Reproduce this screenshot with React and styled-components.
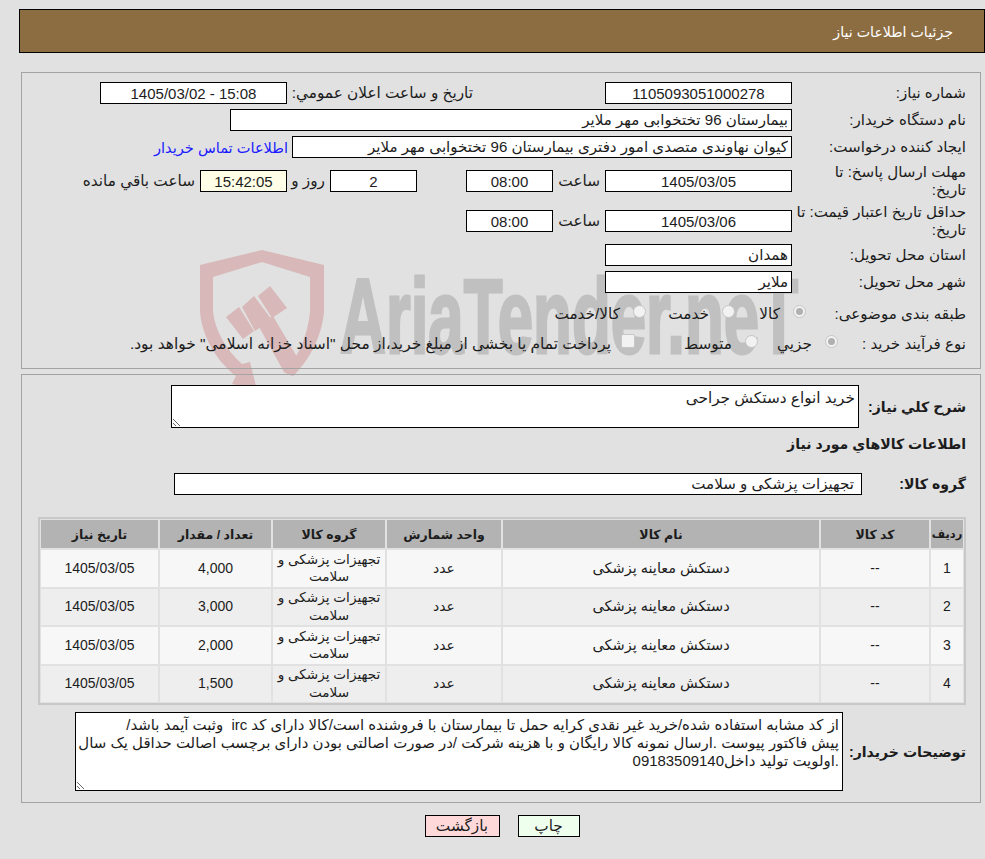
import React from "react";
import styled, { createGlobalStyle } from "styled-components";

const GlobalStyle = createGlobalStyle`
  html, body {
    margin: 0;
    padding: 0;
    background: #e1e1e1;
    overflow: hidden;
  }
  body {
    font-family: "Liberation Sans", "DejaVu Sans", sans-serif;
    font-size: 15.3px;
    color: #1c1c1c;
  }
`;

const rows = [
  { id: 1, qty: "4,000" },
  { id: 2, qty: "3,000" },
  { id: 3, qty: "2,000" },
  { id: 4, qty: "1,500" },
];

const description =
  "از کد مشابه استفاده شده/خرید غیر نقدی کرایه حمل تا بیمارستان با فروشنده است/کالا دارای کد irc  وثبت آیمد باشد/\n" +
  "پیش فاکتور پیوست .ارسال نمونه کالا رایگان و با هزینه شرکت /در صورت اصالتی بودن دارای برچسب اصالت حداقل یک سال\n" +
  ".اولویت تولید داخل09183509140";

const Watermark = () => (
  <Mark viewBox="190 245 620 145" aria-hidden="true">
    <g fill="#d8b8b8">
      <path
        fillRule="evenodd"
        d="M262 250 L324 265 V312 C322 335 310 360 293 376 L284 372 C298 358 308 335 310 312 V277 L262 262 L213 277 V312 C215 330 226 350 242 364 L250 362 L257 390 L232 384 L236 376 C215 360 202 335 200 312 V265 Z"
      />
      <polygon points="258,296 270,286 287,308 272,318" />
      <polygon points="242,307 254,296 272,320 255,331" />
      <polygon points="226,317 239,307 254,331 243,339" />
      <polygon points="258,325 273,316 300,362 292,376 284,372" />
    </g>
    <text
      x="340"
      y="353"
      fill="#c0c0c0"
      stroke="#c0c0c0"
      strokeWidth="3"
      fontFamily="Liberation Sans"
      fontWeight="700"
      fontSize="105"
      textLength="458"
      lengthAdjust="spacingAndGlyphs"
      direction="ltr"
    >
      AriaTender.neT
    </text>
  </Mark>
);

const App = () => {
  return (
    <Page dir="rtl">
      <GlobalStyle />
      <Watermark />
      <Content>
        <Header>جزئیات اطلاعات نیاز</Header>

        <InfoPanel>
          <Row $first>
            <Label>شماره نیاز:</Label>
            <Field $w={187} $center readOnly value="1105093051000278" />
            <InlineLabel $w={186} $mr={132}>تاریخ و ساعت اعلان عمومي:</InlineLabel>
            <Field $w={187} $center $ltr readOnly value="1405/03/02 - 15:08" />
          </Row>
          <Row>
            <Label>نام دستگاه خریدار:</Label>
            <Field $w={562} readOnly value="بیمارستان 96 تختخوابی مهر ملایر" />
          </Row>
          <Row>
            <Label>ایجاد کننده درخواست:</Label>
            <Field $w={500} readOnly value="کیوان نهاوندی متصدی امور دفتری بیمارستان 96 تختخوابی مهر ملایر" />
            <ContactLink href="#">اطلاعات تماس خریدار</ContactLink>
          </Row>
          <Row $h={36}>
            <Label>مهلت ارسال پاسخ: تا<br />تاریخ:</Label>
            <Field $w={187} $center readOnly value="1405/03/05" />
            <InlineLabel $w={47} $mr={5}>ساعت</InlineLabel>
            <Field $w={87} $center readOnly value="08:00" />
            <Field $w={87} $mr={49} $center readOnly value="2" />
            <InlineLabel $w={38} $mr={5}>روز و</InlineLabel>
            <Field $w={87} $center $bg="#ffffe8" readOnly value="15:42:05" />
            <InlineLabel $mr={5}>ساعت باقي مانده</InlineLabel>
          </Row>
          <Row $h={36} $mt={4}>
            <Label>حداقل تاریخ اعتبار قیمت: تا<br />تاریخ:</Label>
            <Field $w={187} $center readOnly value="1405/03/06" />
            <InlineLabel $w={47} $mr={5}>ساعت</InlineLabel>
            <Field $w={87} $center readOnly value="08:00" />
          </Row>
          <Row>
            <Label>استان محل تحویل:</Label>
            <Field $w={187} readOnly value="همدان" />
          </Row>
          <Row>
            <Label>شهر محل تحویل:</Label>
            <Field $w={187} readOnly value="ملایر" />
          </Row>
          <Row $mt={10}>
            <Label $w={160}>طبقه بندی موضوعی:</Label>
            <Choice $w={71}><Radio $on />کالا</Choice>
            <Choice $w={89}><Radio />خدمت</Choice>
            <Choice><Radio />کالا/خدمت</Choice>
          </Row>
          <Row $mt={8}>
            <Label $w={128}>نوع فرآیند خرید :</Label>
            <Choice $w={80}><Radio $on />جزيي</Choice>
            <Choice $w={123}><Radio />متوسط</Choice>
            <Choice $fs={15.45}><CheckBox />پرداخت تمام یا بخشی از مبلغ خرید،از محل "اسناد خزانه اسلامی" خواهد بود.</Choice>
          </Row>
        </InfoPanel>

        <GoodsPanel>
          <Row $first>
            <BoldLabel $w={107}>شرح کلي نیاز:</BoldLabel>
            <Note $w={688} $h={43} readOnly value="خرید انواع دستکش جراحی" />
          </Row>
          <SectionTitle>اطلاعات کالاهاي مورد نیاز</SectionTitle>
          <Row $mt={20}>
            <BoldLabel $w={104}>گروه کالا:</BoldLabel>
            <GroupField $w={688} readOnly value="تجهیزات پزشکی و سلامت" />
          </Row>

          <GoodsTable>
            <colgroup>
              <col width="32" />
              <col width="108" />
              <col width="316" />
              <col width="114" />
              <col width="112" />
              <col width="111" />
              <col width="117" />
            </colgroup>
            <thead>
              <tr>
                <th>ردیف</th>
                <th>کد کالا</th>
                <th>نام کالا</th>
                <th>واحد شمارش</th>
                <th>گروه کالا</th>
                <th>تعداد / مقدار</th>
                <th>تاریخ نیاز</th>
              </tr>
            </thead>
            <tbody>
              {rows.map((row) => (
                <tr key={row.id}>
                  <td>{row.id}</td>
                  <td>--</td>
                  <td>دستکش معاینه پزشکی</td>
                  <td>عدد</td>
                  <td>تجهیزات پزشکی و سلامت</td>
                  <td>{row.qty}</td>
                  <td>1405/03/05</td>
                </tr>
              ))}
            </tbody>
          </GoodsTable>

          <Row $mt={7}>
            <BoldLabel $w={123}>توضیحات خریدار:</BoldLabel>
            <Note $w={768} $h={79} $fs={14.95} readOnly value={description} />
          </Row>
        </GoodsPanel>

        <Actions>
          <ActionButton type="button" $w={62} $bg="#eeffee">چاپ</ActionButton>
          <ActionButton type="button" $w={75} $bg="#ffd9d9">بازگشت</ActionButton>
        </Actions>
      </Content>
    </Page>
  );
};

export default App;

const Page = styled.div`
  position: relative;
  width: 985px;
  height: 859px;
  overflow: hidden;
`;

const Mark = styled.svg`
  position: absolute;
  left: 190px;
  top: 245px;
  width: 620px;
  height: 145px;
`;

const Content = styled.div`
  position: relative;
  padding-top: 9px;
`;

const Header = styled.div`
  box-sizing: border-box;
  width: 966px;
  height: 44px;
  margin-left: 19px;
  padding: 2px 31px 0;
  display: flex;
  align-items: center;
  background: #8c6d42;
  border: 1px solid #000;
  color: #fff;
  font-size: 14.2px;
`;

const Panel = styled.section`
  box-sizing: border-box;
  width: 960px;
  margin-right: 4px;
  padding: 9px 14px 0 0;
  border: 1px solid #a3a3a3;
`;

const InfoPanel = styled(Panel)`
  height: 297px;
  margin-top: 19px;
`;

const GoodsPanel = styled(Panel)`
  height: 429px;
  margin-top: 5px;
  padding-top: 10px;
`;

const Row = styled.div`
  display: flex;
  align-items: center;
  height: ${(p) => (p.$h ? `${p.$h}px` : "auto")};
  min-height: 22px;
  margin-top: ${(p) => (p.$first ? 0 : p.$mt ?? 5)}px;
`;

const Label = styled.label`
  flex: none;
  width: ${(p) => p.$w ?? 167}px;
  margin-left: ${(p) => (p.$w ? 0 : 7)}px;
  font-size: 15.1px;
  line-height: 18px;
  white-space: nowrap;
`;

const BoldLabel = styled.label`
  flex: none;
  width: ${(p) => p.$w}px;
  font-weight: 700;
  font-size: 14.1px;
  white-space: nowrap;
`;

const InlineLabel = styled.span`
  flex: none;
  width: ${(p) => (p.$w ? `${p.$w}px` : "auto")};
  margin-right: ${(p) => p.$mr ?? 0}px;
  white-space: nowrap;
`;

const Field = styled.input`
  box-sizing: border-box;
  flex: none;
  width: ${(p) => p.$w}px;
  height: 22px;
  margin: 0 ${(p) => p.$mr ?? 0}px 0 0;
  padding: 0 3px;
  border: 1px solid #000;
  border-radius: 0;
  outline: none;
  background: ${(p) => p.$bg ?? "#fff"};
  color: #1c1c1c;
  font: inherit;
  font-size: ${(p) => (p.$center ? 15 : 15.1)}px;
  text-align: ${(p) => (p.$center ? "center" : "right")};
  direction: ${(p) => (p.$ltr ? "ltr" : "rtl")};
`;

const GroupField = styled(Field)`
  padding-right: 7px;
`;

const ContactLink = styled.a`
  margin-right: 4px;
  color: #1a1aff;
  font-size: 14.6px;
  text-decoration: none;
  white-space: nowrap;
`;

const Choice = styled.span`
  flex: none;
  display: flex;
  align-items: center;
  width: ${(p) => (p.$w ? `${p.$w}px` : "auto")};
  font-size: ${(p) => p.$fs ?? 15.3}px;
  white-space: nowrap;
`;

const Radio = styled.span`
  position: relative;
  flex: none;
  box-sizing: border-box;
  width: 13px;
  height: 13px;
  margin: 0 0 6px 13px;
  border: 1px solid #c6c6c6;
  border-radius: 50%;
  background: #f2f2f2;

  &::after {
    content: "";
    display: ${(p) => (p.$on ? "block" : "none")};
    position: absolute;
    inset: 2px;
    border-radius: 50%;
    background: #b0b0b0;
  }
`;

const CheckBox = styled.span`
  flex: none;
  box-sizing: border-box;
  width: 14px;
  height: 14px;
  margin: 0 0 6px 10px;
  border: 1px solid #c6c6c6;
  border-radius: 2px;
  background: #f2f2f2;
`;

const Note = styled.textarea`
  box-sizing: border-box;
  flex: none;
  display: block;
  width: ${(p) => p.$w}px;
  height: ${(p) => p.$h}px;
  margin: 0;
  padding: 3px 3px 0;
  border: 1px solid #000;
  border-radius: 0;
  outline: none;
  background: #fff;
  color: #1c1c1c;
  font: inherit;
  font-size: ${(p) => p.$fs ?? 15.3}px;
  line-height: 18px;
  white-space: pre;
  overflow: hidden;
`;

const SectionTitle = styled.div`
  margin-top: 7px;
  font-weight: 700;
  font-size: 14.1px;
  line-height: 18px;
  white-space: nowrap;
`;

const GoodsTable = styled.table`
  box-sizing: border-box;
  table-layout: fixed;
  width: 928px;
  margin-top: 22px;
  border-collapse: separate;
  border-spacing: 2px;
  border: 1px solid #c8c8c8;
  box-shadow: inset 0 0 0 1px #c8c8c8;
  font-size: 14px;

  th {
    height: 28px;
    padding: 0;
    background: #b3b3b3;
    font-size: 12.5px;
    font-weight: 700;
    white-space: nowrap;
  }

  th:first-child {
    font-size: 11.5px;
  }

  td {
    height: 36.5px;
    padding: 0 2px;
    text-align: center;
    line-height: 17.5px;
    background: #f7f7f7;
  }

  td:nth-child(3) {
    font-size: 14.5px;
  }

  td:nth-child(5) {
    font-size: 13.6px;
  }

  tbody tr:nth-child(even) td {
    background: #eeeeee;
  }
`;

const Actions = styled.div`
  display: flex;
  justify-content: center;
  gap: 18px;
  width: 966px;
  margin-top: 12px;
`;

const ActionButton = styled.button`
  box-sizing: border-box;
  width: ${(p) => p.$w}px;
  height: 22px;
  padding: 0;
  border: 1px solid #000;
  border-radius: 0;
  background: ${(p) => p.$bg};
  color: #1c1c1c;
  font: inherit;
`;
